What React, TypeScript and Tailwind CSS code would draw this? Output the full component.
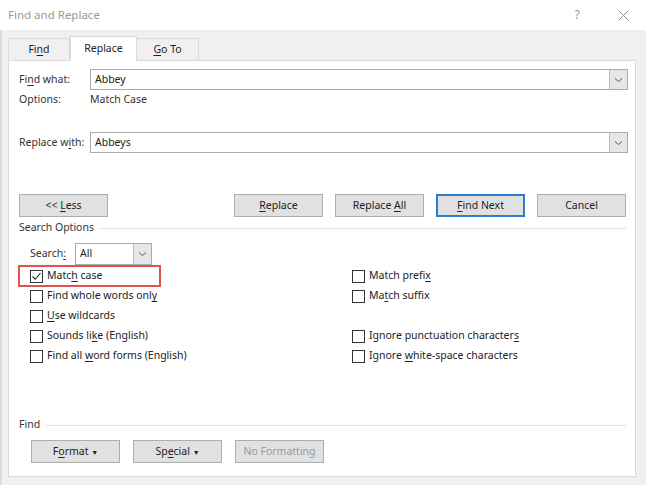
import React from "react";

const U = ({ children }: { children: React.ReactNode }) => (
  <span className="underline underline-offset-2 decoration-1">{children}</span>
);

function Chevron() {
  return (
    <svg width="9" height="6" viewBox="0 0 9 6" fill="none">
      <path d="M1 1.5 L4.5 4.5 L8 1.5" stroke="#555" strokeWidth="1" />
    </svg>
  );
}

function Combo({ value, className }: { value: string; className: string }) {
  return (
    <div className={`flex h-[21px] border border-[#ababab] bg-white ${className}`}>
      <div className="flex-1 flex items-center pl-[4px] text-[10.5px] text-[#222]">{value}</div>
      <div className="w-[18px] flex items-center justify-center bg-[#e6e6e6] border-l border-[#bcbcbc]">
        <Chevron />
      </div>
    </div>
  );
}

function Btn({
  children,
  className = "",
  primary = false,
  disabled = false,
}: {
  children: React.ReactNode;
  className?: string;
  primary?: boolean;
  disabled?: boolean;
}) {
  return (
    <div
      className={`h-[23px] w-[89px] flex items-center justify-center text-[10.5px] ${
        primary ? "border-2 border-[#2b7cd3] bg-[#e1e1e1]" : "border border-[#adadad] bg-[#e1e1e1]"
      } ${disabled ? "text-[#9a9a9a]" : "text-[#222]"} ${className}`}
    >
      <span className="whitespace-pre">{children}</span>
    </div>
  );
}

function Check({ checked = false }: { checked?: boolean }) {
  return (
    <div className="w-[13px] h-[13px] border border-[#333] bg-white flex items-center justify-center shrink-0">
      {checked && (
        <svg width="11" height="11" viewBox="0 0 11 11" fill="none">
          <path d="M1.5 5.5 L4.2 8.3 L9.5 2" stroke="#222" strokeWidth="1.1" />
        </svg>
      )}
    </div>
  );
}

function Opt({ children, checked = false }: { children: React.ReactNode; checked?: boolean }) {
  return (
    <div className="h-[20px] flex items-center gap-[4px] text-[10.5px] text-[#222]">
      <Check checked={checked} />
      <span className="whitespace-pre">{children}</span>
    </div>
  );
}

export default function App() {
  return (
    <div
      className="w-[646px] h-[485px] bg-[#f0f0f0] overflow-hidden flex flex-col"
      style={{ fontFamily: '"Noto Sans", "Open Sans", sans-serif' }}
    >
      {/* Title bar */}
      <div className="h-[30px] bg-white flex items-center pl-[8px] shrink-0">
        <div className="text-[11.5px] text-[#9a9a9a] flex-1">Find and Replace</div>
        <div className="text-[12px] text-[#9a9a9a] mr-[38px]">?</div>
        <div className="mr-[17px]">
          <svg width="11" height="11" viewBox="0 0 11 11">
            <path d="M0.5 0.5 L10.5 10.5 M10.5 0.5 L0.5 10.5" stroke="#8a8a8a" strokeWidth="1" />
          </svg>
        </div>
      </div>

      <div className="flex-1 border-l-2 border-[#dcdcdc] flex flex-col">
        {/* Tabs */}
        <div className="flex items-end pl-[6px] pt-[6px] h-[30px] shrink-0">
          <div className="w-[62px] h-[22px] flex items-center justify-center border border-b-0 border-[#dadada] bg-[#f0f0f0] text-[10.5px] text-[#222]">
            <span>
              Fi<U>n</U>d
            </span>
          </div>
          <div className="w-[67px] h-[25px] -mb-px flex items-start pt-[4px] justify-center border border-b-0 border-[#dadada] bg-white text-[10.5px] text-[#222] relative z-10">
            Replace
          </div>
          <div className="w-[62px] h-[22px] flex items-center justify-center border border-b-0 border-l-0 border-[#dadada] bg-[#f0f0f0] text-[10.5px] text-[#222]">
            <span>
              <U>G</U>o To
            </span>
          </div>
        </div>

        {/* Panel */}
        <div className="ml-[6px] w-[628px] h-[417px] bg-white border border-[#dadada] flex flex-col pl-[10px] pr-[7px]">
          {/* Find what */}
          <div className="flex items-center mt-[8px]">
            <div className="w-[71px] whitespace-nowrap text-[10.5px] text-[#333]">
              Fi<U>n</U>d what:
            </div>
            <Combo value="Abbey" className="flex-1" />
          </div>
          <div className="flex items-center h-[20px] text-[10.5px] text-[#333]">
            <div className="w-[71px]">Options:</div>
            <div>Match Case</div>
          </div>
          {/* Replace with */}
          <div className="flex items-center mt-[22px]">
            <div className="w-[71px] whitespace-nowrap text-[10.5px] text-[#333]">
              Replace w<U>i</U>th:
            </div>
            <Combo value="Abbeys" className="flex-1" />
          </div>

          {/* Buttons */}
          <div className="flex items-center mt-[41px] mr-[2px]">
            <Btn>
              {"<< "}
              <U>L</U>ess
            </Btn>
            <div className="flex-1" />
            <Btn className="mr-[12px]">
              <U>R</U>eplace
            </Btn>
            <Btn className="mr-[12px]">
              {"Replace "}
              <U>A</U>ll
            </Btn>
            <Btn primary className="mr-[12px]">
              <U>F</U>ind Next
            </Btn>
            <Btn>Cancel</Btn>
          </div>

          {/* Search Options */}
          <div className="flex items-center mt-[2px] h-[18px]">
            <div className="text-[10.5px] text-[#333] mr-[6px]">Search Options</div>
            <div className="flex-1 h-px bg-[#e3e3e3] mr-[2px]" />
          </div>

          <div className="flex items-center mt-[6px] ml-[11px]">
            <div className="w-[45px] text-[10.5px] text-[#333]">
              Search<U>:</U>
            </div>
            <Combo value="All" className="w-[77px] h-[22px]" />
          </div>

          <div className="flex mt-[1px] ml-[11px]">
            <div className="w-[322px] flex flex-col">
              <div className="relative">
                <div className="absolute left-[-12px] top-[-1px] w-[143px] h-[22px] border-2 border-[#e0524e]" />
                <Opt checked>
                  Matc<U>h</U> case
                </Opt>
              </div>
              <Opt>
                Find whole words onl<U>y</U>
              </Opt>
              <Opt>
                <U>U</U>se wildcards
              </Opt>
              <Opt>
                Sounds li<U>k</U>e (English)
              </Opt>
              <Opt>
                {"Find all "}
                <U>w</U>ord forms (English)
              </Opt>
            </div>
            <div className="flex flex-col">
              <Opt>
                Match prefi<U>x</U>
              </Opt>
              <Opt>
                Ma<U>t</U>ch suffix
              </Opt>
              <div className="h-[20px]" />
              <Opt>
                Ignore punctuation character<U>s</U>
              </Opt>
              <Opt>
                {"Ignore "}
                <U>w</U>hite-space characters
              </Opt>
            </div>
          </div>

          {/* Find */}
          <div className="flex items-center mt-[50px] h-[18px]">
            <div className="text-[10.5px] text-[#333] mr-[6px]">Find</div>
            <div className="flex-1 h-px bg-[#e3e3e3] mr-[2px]" />
          </div>
          <div className="flex items-center mt-[6px] ml-[12px] gap-[13px]">
            <Btn className="w-[88px] h-[22px]">
              F<U>o</U>rmat <span className="text-[7px]">▼</span>
            </Btn>
            <Btn className="w-[88px] h-[22px]">
              Sp<U>e</U>cial <span className="text-[7px]">▼</span>
            </Btn>
            <Btn disabled className="w-[88px] h-[22px]">
              No Formatting
            </Btn>
          </div>
        </div>
      </div>
    </div>
  );
}
